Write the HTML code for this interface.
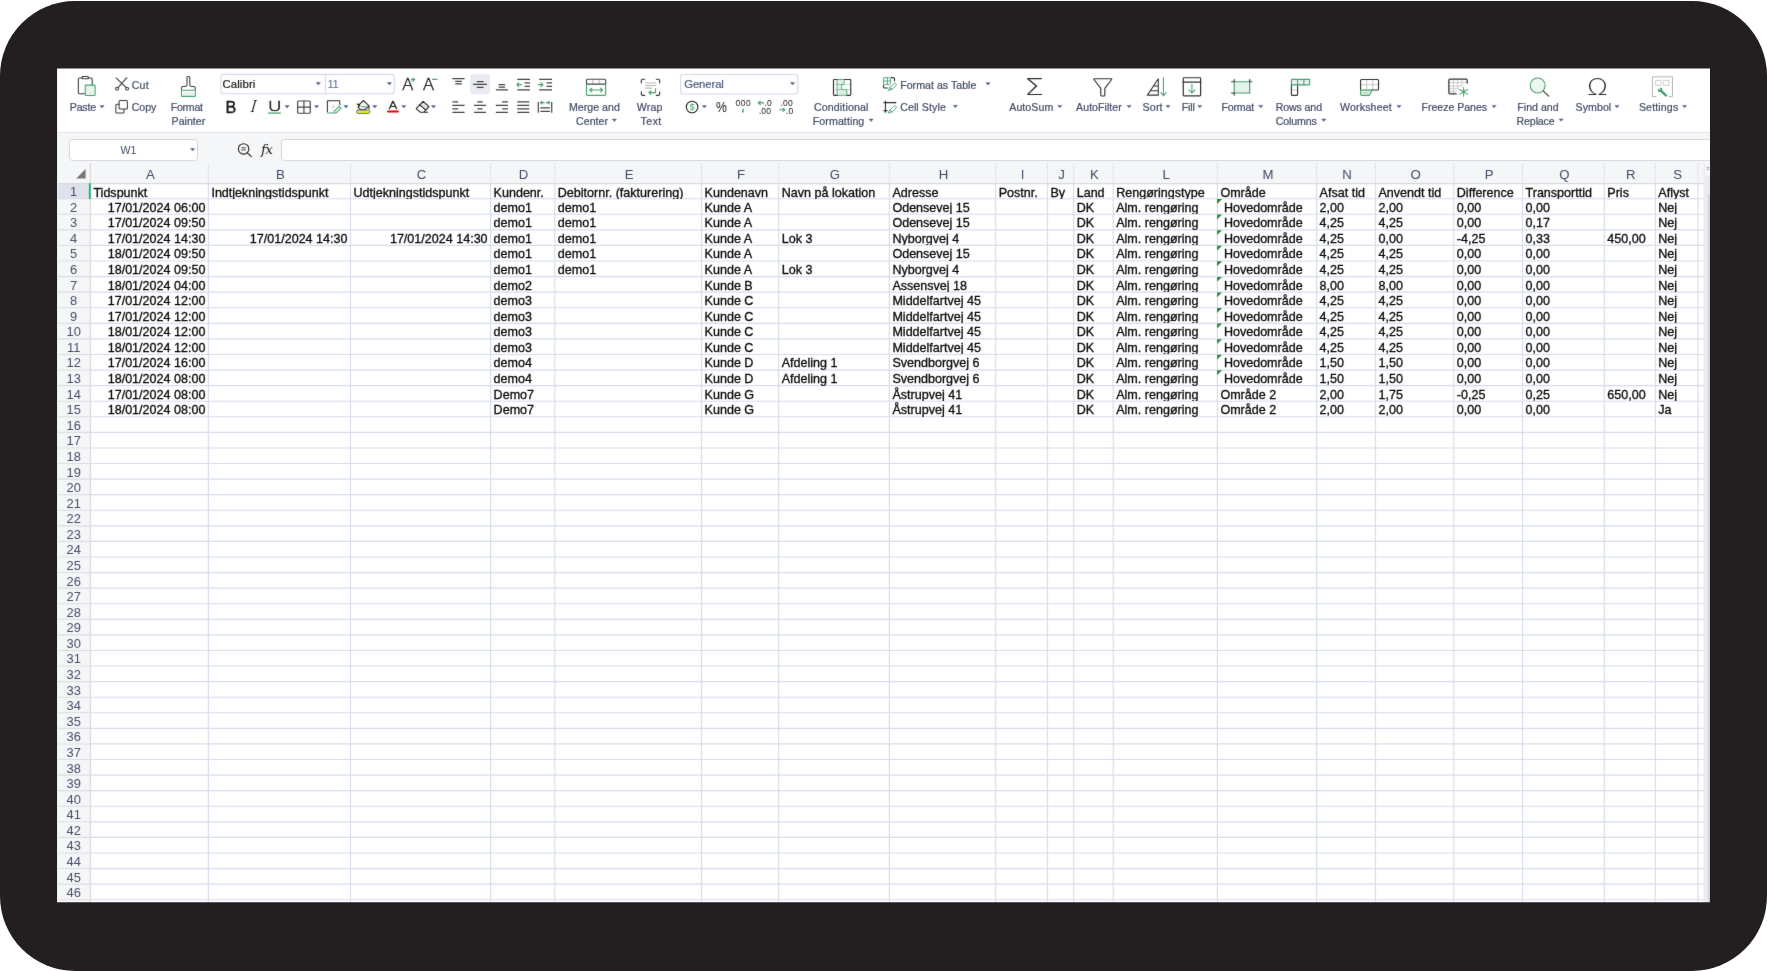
<!DOCTYPE html>
<html lang="da"><head><meta charset="utf-8"><title>Regneark</title>
<style>
html,body{margin:0;padding:0}
body{width:1767px;height:971px;background:#fff;position:relative;overflow:hidden;font-family:"Liberation Sans",sans-serif;}
#frame{position:absolute;left:0;top:1px;width:1767px;height:970px;background:#231f20;border-radius:75px}
#wrap{position:absolute;left:57px;top:68px;width:1653px;height:835px;overflow:hidden}
#inner{position:absolute;left:-57px;top:-68px;width:1767px;height:971px;will-change:transform;filter:url(#soft)}
.abs{position:absolute}
#fb{position:absolute;left:53px;top:132.3px;width:1661px;height:51.2px;background:#f5f6f8;border-top:1.2px solid #e1e5ee;box-sizing:border-box}
.ch{position:absolute;top:163.5px;height:20px;line-height:21px;font-size:13.2px;color:#3e4a66;text-align:center}
.rh{position:absolute;left:57px;width:33.4px;text-align:center;font-size:12.9px;color:#434e69;white-space:nowrap}
.c{position:absolute;font-size:12.55px;color:#0a0a0a;-webkit-text-stroke:0.3px #050505;white-space:nowrap;overflow:hidden;box-sizing:border-box;padding:0 3px}
.r{text-align:right}

.lb{position:absolute;line-height:14px;white-space:nowrap}
svg{position:absolute;overflow:visible}
</style></head><body>
<svg width="0" height="0" style="position:absolute"><filter id="soft" x="0" y="0" width="100%" height="100%" color-interpolation-filters="sRGB"><feConvolveMatrix order="3" kernelMatrix="0.00524 0.06192 0.00524 0.06192 0.73137 0.06192 0.00524 0.06192 0.00524" edgeMode="duplicate" preserveAlpha="true"/></filter></svg>
<div id="frame"></div>
<div id="wrap"><div id="inner">
<div class="abs" style="left:53px;top:64px;width:1661px;height:843px;background:#fff"></div>
<div id="fb"></div>

<div class="abs" style="left:69.2px;top:138.6px;width:128.6px;height:22.6px;box-sizing:border-box;border:1px solid #d4d6da;border-radius:3.5px;background:#fff;font-size:10.6px;color:#3e4a66;line-height:21px;text-align:center;padding-right:10px">W1</div>
<div class="abs" style="left:281.4px;top:138.6px;width:1440px;height:22.6px;box-sizing:border-box;border:1px solid #d4d6da;border-radius:3.5px;background:#fff"></div>
<svg style="left:236px;top:141px" width="18" height="18" viewBox="0 0 18 18"><circle cx="7.6" cy="7.9" r="5.2" fill="none" stroke="#222" stroke-width="1.1"/><path d="M11.4 11.8 L15.6 15.9" stroke="#222" stroke-width="1.1" fill="none"/><path d="M5.4 6.8h4.4M5.4 8.9h4.4" stroke="#222" stroke-width="0.85" fill="none"/></svg>
<div class="abs" style="left:260.9px;top:139.3px;font-family:'DejaVu Serif','Liberation Serif',serif;font-style:italic;font-size:13.6px;line-height:20px;color:#222;letter-spacing:-0.6px">fx</div>
<div class="abs" style="left:53px;top:163px;width:1651.2px;height:20.5px;background:#f5f6f8"></div>
<div class="abs" style="left:53px;top:183.5px;width:37.4px;height:723px;background:#f5f6f8"></div>
<div class="abs" style="left:53px;top:183.5px;width:36.4px;height:15.2px;background:#dfe2eb"></div>
<div class="abs" style="left:1704.2px;top:163px;width:9.8px;height:744px;background:#f6f7f9"></div>
<svg style="left:0;top:0" width="1767" height="971"><rect x="1705.4" y="175.5" width="8" height="731" fill="#e8eaef"/><rect x="1708.4" y="194" width="5" height="712" fill="#cdd0d7"/><path d="M1706.6 167.3h2.6M1706.6 169.3h2.6" stroke="#7f8fc0" stroke-width="0.9"/></svg>
<svg style="left:0;top:0" width="1767" height="971" viewBox="0 0 1767 971"><path d="M90.4 198.70H1704.2" stroke="#d6dcec" stroke-width="1.15"/><path d="M53 198.70H90.4" stroke="#dcdde1" stroke-width="1.1"/><path d="M90.4 214.28H1704.2" stroke="#d6dcec" stroke-width="1.15"/><path d="M53 214.28H90.4" stroke="#dcdde1" stroke-width="1.1"/><path d="M90.4 229.86H1704.2" stroke="#d6dcec" stroke-width="1.15"/><path d="M53 229.86H90.4" stroke="#dcdde1" stroke-width="1.1"/><path d="M90.4 245.43H1704.2" stroke="#d6dcec" stroke-width="1.15"/><path d="M53 245.43H90.4" stroke="#dcdde1" stroke-width="1.1"/><path d="M90.4 261.01H1704.2" stroke="#d6dcec" stroke-width="1.15"/><path d="M53 261.01H90.4" stroke="#dcdde1" stroke-width="1.1"/><path d="M90.4 276.59H1704.2" stroke="#d6dcec" stroke-width="1.15"/><path d="M53 276.59H90.4" stroke="#dcdde1" stroke-width="1.1"/><path d="M90.4 292.17H1704.2" stroke="#d6dcec" stroke-width="1.15"/><path d="M53 292.17H90.4" stroke="#dcdde1" stroke-width="1.1"/><path d="M90.4 307.75H1704.2" stroke="#d6dcec" stroke-width="1.15"/><path d="M53 307.75H90.4" stroke="#dcdde1" stroke-width="1.1"/><path d="M90.4 323.32H1704.2" stroke="#d6dcec" stroke-width="1.15"/><path d="M53 323.32H90.4" stroke="#dcdde1" stroke-width="1.1"/><path d="M90.4 338.90H1704.2" stroke="#d6dcec" stroke-width="1.15"/><path d="M53 338.90H90.4" stroke="#dcdde1" stroke-width="1.1"/><path d="M90.4 354.48H1704.2" stroke="#d6dcec" stroke-width="1.15"/><path d="M53 354.48H90.4" stroke="#dcdde1" stroke-width="1.1"/><path d="M90.4 370.06H1704.2" stroke="#d6dcec" stroke-width="1.15"/><path d="M53 370.06H90.4" stroke="#dcdde1" stroke-width="1.1"/><path d="M90.4 385.64H1704.2" stroke="#d6dcec" stroke-width="1.15"/><path d="M53 385.64H90.4" stroke="#dcdde1" stroke-width="1.1"/><path d="M90.4 401.21H1704.2" stroke="#d6dcec" stroke-width="1.15"/><path d="M53 401.21H90.4" stroke="#dcdde1" stroke-width="1.1"/><path d="M90.4 416.79H1704.2" stroke="#d6dcec" stroke-width="1.15"/><path d="M53 416.79H90.4" stroke="#dcdde1" stroke-width="1.1"/><path d="M90.4 432.37H1704.2" stroke="#d6dcec" stroke-width="1.15"/><path d="M53 432.37H90.4" stroke="#dcdde1" stroke-width="1.1"/><path d="M90.4 447.95H1704.2" stroke="#d6dcec" stroke-width="1.15"/><path d="M53 447.95H90.4" stroke="#dcdde1" stroke-width="1.1"/><path d="M90.4 463.53H1704.2" stroke="#d6dcec" stroke-width="1.15"/><path d="M53 463.53H90.4" stroke="#dcdde1" stroke-width="1.1"/><path d="M90.4 479.10H1704.2" stroke="#d6dcec" stroke-width="1.15"/><path d="M53 479.10H90.4" stroke="#dcdde1" stroke-width="1.1"/><path d="M90.4 494.68H1704.2" stroke="#d6dcec" stroke-width="1.15"/><path d="M53 494.68H90.4" stroke="#dcdde1" stroke-width="1.1"/><path d="M90.4 510.26H1704.2" stroke="#d6dcec" stroke-width="1.15"/><path d="M53 510.26H90.4" stroke="#dcdde1" stroke-width="1.1"/><path d="M90.4 525.84H1704.2" stroke="#d6dcec" stroke-width="1.15"/><path d="M53 525.84H90.4" stroke="#dcdde1" stroke-width="1.1"/><path d="M90.4 541.42H1704.2" stroke="#d6dcec" stroke-width="1.15"/><path d="M53 541.42H90.4" stroke="#dcdde1" stroke-width="1.1"/><path d="M90.4 556.99H1704.2" stroke="#d6dcec" stroke-width="1.15"/><path d="M53 556.99H90.4" stroke="#dcdde1" stroke-width="1.1"/><path d="M90.4 572.57H1704.2" stroke="#d6dcec" stroke-width="1.15"/><path d="M53 572.57H90.4" stroke="#dcdde1" stroke-width="1.1"/><path d="M90.4 588.15H1704.2" stroke="#d6dcec" stroke-width="1.15"/><path d="M53 588.15H90.4" stroke="#dcdde1" stroke-width="1.1"/><path d="M90.4 603.73H1704.2" stroke="#d6dcec" stroke-width="1.15"/><path d="M53 603.73H90.4" stroke="#dcdde1" stroke-width="1.1"/><path d="M90.4 619.31H1704.2" stroke="#d6dcec" stroke-width="1.15"/><path d="M53 619.31H90.4" stroke="#dcdde1" stroke-width="1.1"/><path d="M90.4 634.88H1704.2" stroke="#d6dcec" stroke-width="1.15"/><path d="M53 634.88H90.4" stroke="#dcdde1" stroke-width="1.1"/><path d="M90.4 650.46H1704.2" stroke="#d6dcec" stroke-width="1.15"/><path d="M53 650.46H90.4" stroke="#dcdde1" stroke-width="1.1"/><path d="M90.4 666.04H1704.2" stroke="#d6dcec" stroke-width="1.15"/><path d="M53 666.04H90.4" stroke="#dcdde1" stroke-width="1.1"/><path d="M90.4 681.62H1704.2" stroke="#d6dcec" stroke-width="1.15"/><path d="M53 681.62H90.4" stroke="#dcdde1" stroke-width="1.1"/><path d="M90.4 697.20H1704.2" stroke="#d6dcec" stroke-width="1.15"/><path d="M53 697.20H90.4" stroke="#dcdde1" stroke-width="1.1"/><path d="M90.4 712.77H1704.2" stroke="#d6dcec" stroke-width="1.15"/><path d="M53 712.77H90.4" stroke="#dcdde1" stroke-width="1.1"/><path d="M90.4 728.35H1704.2" stroke="#d6dcec" stroke-width="1.15"/><path d="M53 728.35H90.4" stroke="#dcdde1" stroke-width="1.1"/><path d="M90.4 743.93H1704.2" stroke="#d6dcec" stroke-width="1.15"/><path d="M53 743.93H90.4" stroke="#dcdde1" stroke-width="1.1"/><path d="M90.4 759.51H1704.2" stroke="#d6dcec" stroke-width="1.15"/><path d="M53 759.51H90.4" stroke="#dcdde1" stroke-width="1.1"/><path d="M90.4 775.09H1704.2" stroke="#d6dcec" stroke-width="1.15"/><path d="M53 775.09H90.4" stroke="#dcdde1" stroke-width="1.1"/><path d="M90.4 790.66H1704.2" stroke="#d6dcec" stroke-width="1.15"/><path d="M53 790.66H90.4" stroke="#dcdde1" stroke-width="1.1"/><path d="M90.4 806.24H1704.2" stroke="#d6dcec" stroke-width="1.15"/><path d="M53 806.24H90.4" stroke="#dcdde1" stroke-width="1.1"/><path d="M90.4 821.82H1704.2" stroke="#d6dcec" stroke-width="1.15"/><path d="M53 821.82H90.4" stroke="#dcdde1" stroke-width="1.1"/><path d="M90.4 837.40H1704.2" stroke="#d6dcec" stroke-width="1.15"/><path d="M53 837.40H90.4" stroke="#dcdde1" stroke-width="1.1"/><path d="M90.4 852.98H1704.2" stroke="#d6dcec" stroke-width="1.15"/><path d="M53 852.98H90.4" stroke="#dcdde1" stroke-width="1.1"/><path d="M90.4 868.55H1704.2" stroke="#d6dcec" stroke-width="1.15"/><path d="M53 868.55H90.4" stroke="#dcdde1" stroke-width="1.1"/><path d="M90.4 884.13H1704.2" stroke="#d6dcec" stroke-width="1.15"/><path d="M53 884.13H90.4" stroke="#dcdde1" stroke-width="1.1"/><path d="M90.4 899.71H1704.2" stroke="#d6dcec" stroke-width="1.15"/><path d="M53 899.71H90.4" stroke="#dcdde1" stroke-width="1.1"/><path d="M208.40 183.5V906" stroke="#d6dcec" stroke-width="1.15"/><path d="M208.40 163V183.5" stroke="#e3e4e8" stroke-width="1.1"/><path d="M350.50 183.5V906" stroke="#d6dcec" stroke-width="1.15"/><path d="M350.50 163V183.5" stroke="#e3e4e8" stroke-width="1.1"/><path d="M490.60 183.5V906" stroke="#d6dcec" stroke-width="1.15"/><path d="M490.60 163V183.5" stroke="#e3e4e8" stroke-width="1.1"/><path d="M554.80 183.5V906" stroke="#d6dcec" stroke-width="1.15"/><path d="M554.80 163V183.5" stroke="#e3e4e8" stroke-width="1.1"/><path d="M701.60 183.5V906" stroke="#d6dcec" stroke-width="1.15"/><path d="M701.60 163V183.5" stroke="#e3e4e8" stroke-width="1.1"/><path d="M778.70 183.5V906" stroke="#d6dcec" stroke-width="1.15"/><path d="M778.70 163V183.5" stroke="#e3e4e8" stroke-width="1.1"/><path d="M889.40 183.5V906" stroke="#d6dcec" stroke-width="1.15"/><path d="M889.40 163V183.5" stroke="#e3e4e8" stroke-width="1.1"/><path d="M995.70 183.5V906" stroke="#d6dcec" stroke-width="1.15"/><path d="M995.70 163V183.5" stroke="#e3e4e8" stroke-width="1.1"/><path d="M1047.50 183.5V906" stroke="#d6dcec" stroke-width="1.15"/><path d="M1047.50 163V183.5" stroke="#e3e4e8" stroke-width="1.1"/><path d="M1073.70 183.5V906" stroke="#d6dcec" stroke-width="1.15"/><path d="M1073.70 163V183.5" stroke="#e3e4e8" stroke-width="1.1"/><path d="M1113.20 183.5V906" stroke="#d6dcec" stroke-width="1.15"/><path d="M1113.20 163V183.5" stroke="#e3e4e8" stroke-width="1.1"/><path d="M1217.40 183.5V906" stroke="#d6dcec" stroke-width="1.15"/><path d="M1217.40 163V183.5" stroke="#e3e4e8" stroke-width="1.1"/><path d="M1316.60 183.5V906" stroke="#d6dcec" stroke-width="1.15"/><path d="M1316.60 163V183.5" stroke="#e3e4e8" stroke-width="1.1"/><path d="M1375.50 183.5V906" stroke="#d6dcec" stroke-width="1.15"/><path d="M1375.50 163V183.5" stroke="#e3e4e8" stroke-width="1.1"/><path d="M1453.80 183.5V906" stroke="#d6dcec" stroke-width="1.15"/><path d="M1453.80 163V183.5" stroke="#e3e4e8" stroke-width="1.1"/><path d="M1522.50 183.5V906" stroke="#d6dcec" stroke-width="1.15"/><path d="M1522.50 163V183.5" stroke="#e3e4e8" stroke-width="1.1"/><path d="M1604.30 183.5V906" stroke="#d6dcec" stroke-width="1.15"/><path d="M1604.30 163V183.5" stroke="#e3e4e8" stroke-width="1.1"/><path d="M1655.30 183.5V906" stroke="#d6dcec" stroke-width="1.15"/><path d="M1655.30 163V183.5" stroke="#e3e4e8" stroke-width="1.1"/><path d="M1698.00 183.5V906" stroke="#d6dcec" stroke-width="1.15"/><path d="M1698.00 163V183.5" stroke="#e3e4e8" stroke-width="1.1"/><path d="M90.40 163V906" stroke="#d9d9dc" stroke-width="1.2"/><path d="M53 183.6H1704.2" stroke="#d9d9dc" stroke-width="1.3"/><path d="M1704.20 163V906" stroke="#e6e7ea" stroke-width="1"/><path d="M89.8 183.2V199" stroke="#12b46f" stroke-width="1.8"/><path d="M85.6 169V178.4H76.2Z" fill="#767676"/><path d="M57.5 68.5V906" stroke="#e9eaed" stroke-width="1"/></svg>
<div class="ch" style="left:91.3px;width:118.0px">A</div>
<div class="ch" style="left:209.3px;width:142.1px">B</div>
<div class="ch" style="left:351.4px;width:140.1px">C</div>
<div class="ch" style="left:491.5px;width:64.2px">D</div>
<div class="ch" style="left:555.7px;width:146.8px">E</div>
<div class="ch" style="left:702.5px;width:77.1px">F</div>
<div class="ch" style="left:779.6px;width:110.7px">G</div>
<div class="ch" style="left:890.3px;width:106.3px">H</div>
<div class="ch" style="left:996.6px;width:51.8px">I</div>
<div class="ch" style="left:1048.4px;width:26.2px">J</div>
<div class="ch" style="left:1074.6px;width:39.5px">K</div>
<div class="ch" style="left:1114.1px;width:104.2px">L</div>
<div class="ch" style="left:1218.3px;width:99.2px">M</div>
<div class="ch" style="left:1317.5px;width:58.9px">N</div>
<div class="ch" style="left:1376.4px;width:78.3px">O</div>
<div class="ch" style="left:1454.7px;width:68.7px">P</div>
<div class="ch" style="left:1523.4px;width:81.8px">Q</div>
<div class="ch" style="left:1605.2px;width:51.0px">R</div>
<div class="ch" style="left:1656.2px;width:42.7px">S</div>
<div class="rh" style="top:183.50px;height:15.20px;line-height:16.80px">1</div>
<div class="rh" style="top:198.70px;height:15.58px;line-height:17.18px">2</div>
<div class="rh" style="top:214.28px;height:15.58px;line-height:17.18px">3</div>
<div class="rh" style="top:229.86px;height:15.58px;line-height:17.18px">4</div>
<div class="rh" style="top:245.43px;height:15.58px;line-height:17.18px">5</div>
<div class="rh" style="top:261.01px;height:15.58px;line-height:17.18px">6</div>
<div class="rh" style="top:276.59px;height:15.58px;line-height:17.18px">7</div>
<div class="rh" style="top:292.17px;height:15.58px;line-height:17.18px">8</div>
<div class="rh" style="top:307.75px;height:15.58px;line-height:17.18px">9</div>
<div class="rh" style="top:323.32px;height:15.58px;line-height:17.18px">10</div>
<div class="rh" style="top:338.90px;height:15.58px;line-height:17.18px">11</div>
<div class="rh" style="top:354.48px;height:15.58px;line-height:17.18px">12</div>
<div class="rh" style="top:370.06px;height:15.58px;line-height:17.18px">13</div>
<div class="rh" style="top:385.64px;height:15.58px;line-height:17.18px">14</div>
<div class="rh" style="top:401.21px;height:15.58px;line-height:17.18px">15</div>
<div class="rh" style="top:416.79px;height:15.58px;line-height:17.18px">16</div>
<div class="rh" style="top:432.37px;height:15.58px;line-height:17.18px">17</div>
<div class="rh" style="top:447.95px;height:15.58px;line-height:17.18px">18</div>
<div class="rh" style="top:463.53px;height:15.58px;line-height:17.18px">19</div>
<div class="rh" style="top:479.10px;height:15.58px;line-height:17.18px">20</div>
<div class="rh" style="top:494.68px;height:15.58px;line-height:17.18px">21</div>
<div class="rh" style="top:510.26px;height:15.58px;line-height:17.18px">22</div>
<div class="rh" style="top:525.84px;height:15.58px;line-height:17.18px">23</div>
<div class="rh" style="top:541.42px;height:15.58px;line-height:17.18px">24</div>
<div class="rh" style="top:556.99px;height:15.58px;line-height:17.18px">25</div>
<div class="rh" style="top:572.57px;height:15.58px;line-height:17.18px">26</div>
<div class="rh" style="top:588.15px;height:15.58px;line-height:17.18px">27</div>
<div class="rh" style="top:603.73px;height:15.58px;line-height:17.18px">28</div>
<div class="rh" style="top:619.31px;height:15.58px;line-height:17.18px">29</div>
<div class="rh" style="top:634.88px;height:15.58px;line-height:17.18px">30</div>
<div class="rh" style="top:650.46px;height:15.58px;line-height:17.18px">31</div>
<div class="rh" style="top:666.04px;height:15.58px;line-height:17.18px">32</div>
<div class="rh" style="top:681.62px;height:15.58px;line-height:17.18px">33</div>
<div class="rh" style="top:697.20px;height:15.58px;line-height:17.18px">34</div>
<div class="rh" style="top:712.77px;height:15.58px;line-height:17.18px">35</div>
<div class="rh" style="top:728.35px;height:15.58px;line-height:17.18px">36</div>
<div class="rh" style="top:743.93px;height:15.58px;line-height:17.18px">37</div>
<div class="rh" style="top:759.51px;height:15.58px;line-height:17.18px">38</div>
<div class="rh" style="top:775.09px;height:15.58px;line-height:17.18px">39</div>
<div class="rh" style="top:790.66px;height:15.58px;line-height:17.18px">40</div>
<div class="rh" style="top:806.24px;height:15.58px;line-height:17.18px">41</div>
<div class="rh" style="top:821.82px;height:15.58px;line-height:17.18px">42</div>
<div class="rh" style="top:837.40px;height:15.58px;line-height:17.18px">43</div>
<div class="rh" style="top:852.98px;height:15.58px;line-height:17.18px">44</div>
<div class="rh" style="top:868.55px;height:15.58px;line-height:17.18px">45</div>
<div class="rh" style="top:884.13px;height:15.58px;line-height:17.18px">46</div>
<div class="c" style="left:90.4px;top:183.50px;width:118.0px;height:15.20px;line-height:18.10px">Tidspunkt</div>
<div class="c" style="left:208.4px;top:183.50px;width:142.1px;height:15.20px;line-height:18.10px">Indtjekningstidspunkt</div>
<div class="c" style="left:350.5px;top:183.50px;width:140.1px;height:15.20px;line-height:18.10px">Udtjekningstidspunkt</div>
<div class="c" style="left:490.6px;top:183.50px;width:64.2px;height:15.20px;line-height:18.10px">Kundenr.</div>
<div class="c" style="left:554.8px;top:183.50px;width:146.8px;height:15.20px;line-height:18.10px">Debitornr. (fakturering)</div>
<div class="c" style="left:701.6px;top:183.50px;width:77.1px;height:15.20px;line-height:18.10px">Kundenavn</div>
<div class="c" style="left:778.7px;top:183.50px;width:110.7px;height:15.20px;line-height:18.10px">Navn på lokation</div>
<div class="c" style="left:889.4px;top:183.50px;width:106.3px;height:15.20px;line-height:18.10px">Adresse</div>
<div class="c" style="left:995.7px;top:183.50px;width:51.8px;height:15.20px;line-height:18.10px">Postnr.</div>
<div class="c" style="left:1047.5px;top:183.50px;width:26.2px;height:15.20px;line-height:18.10px">By</div>
<div class="c" style="left:1073.7px;top:183.50px;width:39.5px;height:15.20px;line-height:18.10px">Land</div>
<div class="c" style="left:1113.2px;top:183.50px;width:104.2px;height:15.20px;line-height:18.10px">Rengøringstype</div>
<div class="c" style="left:1217.4px;top:183.50px;width:99.2px;height:15.20px;line-height:18.10px">Område</div>
<div class="c" style="left:1316.6px;top:183.50px;width:58.9px;height:15.20px;line-height:18.10px">Afsat tid</div>
<div class="c" style="left:1375.5px;top:183.50px;width:78.3px;height:15.20px;line-height:18.10px">Anvendt tid</div>
<div class="c" style="left:1453.8px;top:183.50px;width:68.7px;height:15.20px;line-height:18.10px">Difference</div>
<div class="c" style="left:1522.5px;top:183.50px;width:81.8px;height:15.20px;line-height:18.10px">Transporttid</div>
<div class="c" style="left:1604.3px;top:183.50px;width:51.0px;height:15.20px;line-height:18.10px">Pris</div>
<div class="c" style="left:1655.3px;top:183.50px;width:42.7px;height:15.20px;line-height:18.10px">Aflyst</div>
<div class="c r" style="left:90.4px;top:198.70px;width:118.0px;height:15.58px;line-height:18.48px">17/01/2024 06:00</div>
<div class="c" style="left:490.6px;top:198.70px;width:64.2px;height:15.58px;line-height:18.48px">demo1</div>
<div class="c" style="left:554.8px;top:198.70px;width:146.8px;height:15.58px;line-height:18.48px">demo1</div>
<div class="c" style="left:701.6px;top:198.70px;width:77.1px;height:15.58px;line-height:18.48px">Kunde A</div>
<div class="c" style="left:889.4px;top:198.70px;width:106.3px;height:15.58px;line-height:18.48px">Odensevej 15</div>
<div class="c" style="left:1073.7px;top:198.70px;width:39.5px;height:15.58px;line-height:18.48px">DK</div>
<div class="c" style="left:1113.2px;top:198.70px;width:104.2px;height:15.58px;line-height:18.48px">Alm. rengøring</div>
<div class="c" style="left:1217.4px;top:198.70px;width:99.2px;height:15.58px;line-height:18.48px"> Hovedområde</div>
<div class="c" style="left:1316.6px;top:198.70px;width:58.9px;height:15.58px;line-height:18.48px">2,00</div>
<div class="c" style="left:1375.5px;top:198.70px;width:78.3px;height:15.58px;line-height:18.48px">2,00</div>
<div class="c" style="left:1453.8px;top:198.70px;width:68.7px;height:15.58px;line-height:18.48px">0,00</div>
<div class="c" style="left:1522.5px;top:198.70px;width:81.8px;height:15.58px;line-height:18.48px">0,00</div>
<div class="c" style="left:1655.3px;top:198.70px;width:42.7px;height:15.58px;line-height:18.48px">Nej</div>
<div class="c r" style="left:90.4px;top:214.28px;width:118.0px;height:15.58px;line-height:18.48px">17/01/2024 09:50</div>
<div class="c" style="left:490.6px;top:214.28px;width:64.2px;height:15.58px;line-height:18.48px">demo1</div>
<div class="c" style="left:554.8px;top:214.28px;width:146.8px;height:15.58px;line-height:18.48px">demo1</div>
<div class="c" style="left:701.6px;top:214.28px;width:77.1px;height:15.58px;line-height:18.48px">Kunde A</div>
<div class="c" style="left:889.4px;top:214.28px;width:106.3px;height:15.58px;line-height:18.48px">Odensevej 15</div>
<div class="c" style="left:1073.7px;top:214.28px;width:39.5px;height:15.58px;line-height:18.48px">DK</div>
<div class="c" style="left:1113.2px;top:214.28px;width:104.2px;height:15.58px;line-height:18.48px">Alm. rengøring</div>
<div class="c" style="left:1217.4px;top:214.28px;width:99.2px;height:15.58px;line-height:18.48px"> Hovedområde</div>
<div class="c" style="left:1316.6px;top:214.28px;width:58.9px;height:15.58px;line-height:18.48px">4,25</div>
<div class="c" style="left:1375.5px;top:214.28px;width:78.3px;height:15.58px;line-height:18.48px">4,25</div>
<div class="c" style="left:1453.8px;top:214.28px;width:68.7px;height:15.58px;line-height:18.48px">0,00</div>
<div class="c" style="left:1522.5px;top:214.28px;width:81.8px;height:15.58px;line-height:18.48px">0,17</div>
<div class="c" style="left:1655.3px;top:214.28px;width:42.7px;height:15.58px;line-height:18.48px">Nej</div>
<div class="c r" style="left:90.4px;top:229.86px;width:118.0px;height:15.58px;line-height:18.48px">17/01/2024 14:30</div>
<div class="c r" style="left:208.4px;top:229.86px;width:142.1px;height:15.58px;line-height:18.48px">17/01/2024 14:30</div>
<div class="c r" style="left:350.5px;top:229.86px;width:140.1px;height:15.58px;line-height:18.48px">17/01/2024 14:30</div>
<div class="c" style="left:490.6px;top:229.86px;width:64.2px;height:15.58px;line-height:18.48px">demo1</div>
<div class="c" style="left:554.8px;top:229.86px;width:146.8px;height:15.58px;line-height:18.48px">demo1</div>
<div class="c" style="left:701.6px;top:229.86px;width:77.1px;height:15.58px;line-height:18.48px">Kunde A</div>
<div class="c" style="left:778.7px;top:229.86px;width:110.7px;height:15.58px;line-height:18.48px">Lok 3</div>
<div class="c" style="left:889.4px;top:229.86px;width:106.3px;height:15.58px;line-height:18.48px">Nyborgvej 4</div>
<div class="c" style="left:1073.7px;top:229.86px;width:39.5px;height:15.58px;line-height:18.48px">DK</div>
<div class="c" style="left:1113.2px;top:229.86px;width:104.2px;height:15.58px;line-height:18.48px">Alm. rengøring</div>
<div class="c" style="left:1217.4px;top:229.86px;width:99.2px;height:15.58px;line-height:18.48px"> Hovedområde</div>
<div class="c" style="left:1316.6px;top:229.86px;width:58.9px;height:15.58px;line-height:18.48px">4,25</div>
<div class="c" style="left:1375.5px;top:229.86px;width:78.3px;height:15.58px;line-height:18.48px">0,00</div>
<div class="c" style="left:1453.8px;top:229.86px;width:68.7px;height:15.58px;line-height:18.48px">-4,25</div>
<div class="c" style="left:1522.5px;top:229.86px;width:81.8px;height:15.58px;line-height:18.48px">0,33</div>
<div class="c" style="left:1604.3px;top:229.86px;width:51.0px;height:15.58px;line-height:18.48px">450,00</div>
<div class="c" style="left:1655.3px;top:229.86px;width:42.7px;height:15.58px;line-height:18.48px">Nej</div>
<div class="c r" style="left:90.4px;top:245.43px;width:118.0px;height:15.58px;line-height:18.48px">18/01/2024 09:50</div>
<div class="c" style="left:490.6px;top:245.43px;width:64.2px;height:15.58px;line-height:18.48px">demo1</div>
<div class="c" style="left:554.8px;top:245.43px;width:146.8px;height:15.58px;line-height:18.48px">demo1</div>
<div class="c" style="left:701.6px;top:245.43px;width:77.1px;height:15.58px;line-height:18.48px">Kunde A</div>
<div class="c" style="left:889.4px;top:245.43px;width:106.3px;height:15.58px;line-height:18.48px">Odensevej 15</div>
<div class="c" style="left:1073.7px;top:245.43px;width:39.5px;height:15.58px;line-height:18.48px">DK</div>
<div class="c" style="left:1113.2px;top:245.43px;width:104.2px;height:15.58px;line-height:18.48px">Alm. rengøring</div>
<div class="c" style="left:1217.4px;top:245.43px;width:99.2px;height:15.58px;line-height:18.48px"> Hovedområde</div>
<div class="c" style="left:1316.6px;top:245.43px;width:58.9px;height:15.58px;line-height:18.48px">4,25</div>
<div class="c" style="left:1375.5px;top:245.43px;width:78.3px;height:15.58px;line-height:18.48px">4,25</div>
<div class="c" style="left:1453.8px;top:245.43px;width:68.7px;height:15.58px;line-height:18.48px">0,00</div>
<div class="c" style="left:1522.5px;top:245.43px;width:81.8px;height:15.58px;line-height:18.48px">0,00</div>
<div class="c" style="left:1655.3px;top:245.43px;width:42.7px;height:15.58px;line-height:18.48px">Nej</div>
<div class="c r" style="left:90.4px;top:261.01px;width:118.0px;height:15.58px;line-height:18.48px">18/01/2024 09:50</div>
<div class="c" style="left:490.6px;top:261.01px;width:64.2px;height:15.58px;line-height:18.48px">demo1</div>
<div class="c" style="left:554.8px;top:261.01px;width:146.8px;height:15.58px;line-height:18.48px">demo1</div>
<div class="c" style="left:701.6px;top:261.01px;width:77.1px;height:15.58px;line-height:18.48px">Kunde A</div>
<div class="c" style="left:778.7px;top:261.01px;width:110.7px;height:15.58px;line-height:18.48px">Lok 3</div>
<div class="c" style="left:889.4px;top:261.01px;width:106.3px;height:15.58px;line-height:18.48px">Nyborgvej 4</div>
<div class="c" style="left:1073.7px;top:261.01px;width:39.5px;height:15.58px;line-height:18.48px">DK</div>
<div class="c" style="left:1113.2px;top:261.01px;width:104.2px;height:15.58px;line-height:18.48px">Alm. rengøring</div>
<div class="c" style="left:1217.4px;top:261.01px;width:99.2px;height:15.58px;line-height:18.48px"> Hovedområde</div>
<div class="c" style="left:1316.6px;top:261.01px;width:58.9px;height:15.58px;line-height:18.48px">4,25</div>
<div class="c" style="left:1375.5px;top:261.01px;width:78.3px;height:15.58px;line-height:18.48px">4,25</div>
<div class="c" style="left:1453.8px;top:261.01px;width:68.7px;height:15.58px;line-height:18.48px">0,00</div>
<div class="c" style="left:1522.5px;top:261.01px;width:81.8px;height:15.58px;line-height:18.48px">0,00</div>
<div class="c" style="left:1655.3px;top:261.01px;width:42.7px;height:15.58px;line-height:18.48px">Nej</div>
<div class="c r" style="left:90.4px;top:276.59px;width:118.0px;height:15.58px;line-height:18.48px">18/01/2024 04:00</div>
<div class="c" style="left:490.6px;top:276.59px;width:64.2px;height:15.58px;line-height:18.48px">demo2</div>
<div class="c" style="left:701.6px;top:276.59px;width:77.1px;height:15.58px;line-height:18.48px">Kunde B</div>
<div class="c" style="left:889.4px;top:276.59px;width:106.3px;height:15.58px;line-height:18.48px">Assensvej 18</div>
<div class="c" style="left:1073.7px;top:276.59px;width:39.5px;height:15.58px;line-height:18.48px">DK</div>
<div class="c" style="left:1113.2px;top:276.59px;width:104.2px;height:15.58px;line-height:18.48px">Alm. rengøring</div>
<div class="c" style="left:1217.4px;top:276.59px;width:99.2px;height:15.58px;line-height:18.48px"> Hovedområde</div>
<div class="c" style="left:1316.6px;top:276.59px;width:58.9px;height:15.58px;line-height:18.48px">8,00</div>
<div class="c" style="left:1375.5px;top:276.59px;width:78.3px;height:15.58px;line-height:18.48px">8,00</div>
<div class="c" style="left:1453.8px;top:276.59px;width:68.7px;height:15.58px;line-height:18.48px">0,00</div>
<div class="c" style="left:1522.5px;top:276.59px;width:81.8px;height:15.58px;line-height:18.48px">0,00</div>
<div class="c" style="left:1655.3px;top:276.59px;width:42.7px;height:15.58px;line-height:18.48px">Nej</div>
<div class="c r" style="left:90.4px;top:292.17px;width:118.0px;height:15.58px;line-height:18.48px">17/01/2024 12:00</div>
<div class="c" style="left:490.6px;top:292.17px;width:64.2px;height:15.58px;line-height:18.48px">demo3</div>
<div class="c" style="left:701.6px;top:292.17px;width:77.1px;height:15.58px;line-height:18.48px">Kunde C</div>
<div class="c" style="left:889.4px;top:292.17px;width:106.3px;height:15.58px;line-height:18.48px">Middelfartvej 45</div>
<div class="c" style="left:1073.7px;top:292.17px;width:39.5px;height:15.58px;line-height:18.48px">DK</div>
<div class="c" style="left:1113.2px;top:292.17px;width:104.2px;height:15.58px;line-height:18.48px">Alm. rengøring</div>
<div class="c" style="left:1217.4px;top:292.17px;width:99.2px;height:15.58px;line-height:18.48px"> Hovedområde</div>
<div class="c" style="left:1316.6px;top:292.17px;width:58.9px;height:15.58px;line-height:18.48px">4,25</div>
<div class="c" style="left:1375.5px;top:292.17px;width:78.3px;height:15.58px;line-height:18.48px">4,25</div>
<div class="c" style="left:1453.8px;top:292.17px;width:68.7px;height:15.58px;line-height:18.48px">0,00</div>
<div class="c" style="left:1522.5px;top:292.17px;width:81.8px;height:15.58px;line-height:18.48px">0,00</div>
<div class="c" style="left:1655.3px;top:292.17px;width:42.7px;height:15.58px;line-height:18.48px">Nej</div>
<div class="c r" style="left:90.4px;top:307.75px;width:118.0px;height:15.58px;line-height:18.48px">17/01/2024 12:00</div>
<div class="c" style="left:490.6px;top:307.75px;width:64.2px;height:15.58px;line-height:18.48px">demo3</div>
<div class="c" style="left:701.6px;top:307.75px;width:77.1px;height:15.58px;line-height:18.48px">Kunde C</div>
<div class="c" style="left:889.4px;top:307.75px;width:106.3px;height:15.58px;line-height:18.48px">Middelfartvej 45</div>
<div class="c" style="left:1073.7px;top:307.75px;width:39.5px;height:15.58px;line-height:18.48px">DK</div>
<div class="c" style="left:1113.2px;top:307.75px;width:104.2px;height:15.58px;line-height:18.48px">Alm. rengøring</div>
<div class="c" style="left:1217.4px;top:307.75px;width:99.2px;height:15.58px;line-height:18.48px"> Hovedområde</div>
<div class="c" style="left:1316.6px;top:307.75px;width:58.9px;height:15.58px;line-height:18.48px">4,25</div>
<div class="c" style="left:1375.5px;top:307.75px;width:78.3px;height:15.58px;line-height:18.48px">4,25</div>
<div class="c" style="left:1453.8px;top:307.75px;width:68.7px;height:15.58px;line-height:18.48px">0,00</div>
<div class="c" style="left:1522.5px;top:307.75px;width:81.8px;height:15.58px;line-height:18.48px">0,00</div>
<div class="c" style="left:1655.3px;top:307.75px;width:42.7px;height:15.58px;line-height:18.48px">Nej</div>
<div class="c r" style="left:90.4px;top:323.32px;width:118.0px;height:15.58px;line-height:18.48px">18/01/2024 12:00</div>
<div class="c" style="left:490.6px;top:323.32px;width:64.2px;height:15.58px;line-height:18.48px">demo3</div>
<div class="c" style="left:701.6px;top:323.32px;width:77.1px;height:15.58px;line-height:18.48px">Kunde C</div>
<div class="c" style="left:889.4px;top:323.32px;width:106.3px;height:15.58px;line-height:18.48px">Middelfartvej 45</div>
<div class="c" style="left:1073.7px;top:323.32px;width:39.5px;height:15.58px;line-height:18.48px">DK</div>
<div class="c" style="left:1113.2px;top:323.32px;width:104.2px;height:15.58px;line-height:18.48px">Alm. rengøring</div>
<div class="c" style="left:1217.4px;top:323.32px;width:99.2px;height:15.58px;line-height:18.48px"> Hovedområde</div>
<div class="c" style="left:1316.6px;top:323.32px;width:58.9px;height:15.58px;line-height:18.48px">4,25</div>
<div class="c" style="left:1375.5px;top:323.32px;width:78.3px;height:15.58px;line-height:18.48px">4,25</div>
<div class="c" style="left:1453.8px;top:323.32px;width:68.7px;height:15.58px;line-height:18.48px">0,00</div>
<div class="c" style="left:1522.5px;top:323.32px;width:81.8px;height:15.58px;line-height:18.48px">0,00</div>
<div class="c" style="left:1655.3px;top:323.32px;width:42.7px;height:15.58px;line-height:18.48px">Nej</div>
<div class="c r" style="left:90.4px;top:338.90px;width:118.0px;height:15.58px;line-height:18.48px">18/01/2024 12:00</div>
<div class="c" style="left:490.6px;top:338.90px;width:64.2px;height:15.58px;line-height:18.48px">demo3</div>
<div class="c" style="left:701.6px;top:338.90px;width:77.1px;height:15.58px;line-height:18.48px">Kunde C</div>
<div class="c" style="left:889.4px;top:338.90px;width:106.3px;height:15.58px;line-height:18.48px">Middelfartvej 45</div>
<div class="c" style="left:1073.7px;top:338.90px;width:39.5px;height:15.58px;line-height:18.48px">DK</div>
<div class="c" style="left:1113.2px;top:338.90px;width:104.2px;height:15.58px;line-height:18.48px">Alm. rengøring</div>
<div class="c" style="left:1217.4px;top:338.90px;width:99.2px;height:15.58px;line-height:18.48px"> Hovedområde</div>
<div class="c" style="left:1316.6px;top:338.90px;width:58.9px;height:15.58px;line-height:18.48px">4,25</div>
<div class="c" style="left:1375.5px;top:338.90px;width:78.3px;height:15.58px;line-height:18.48px">4,25</div>
<div class="c" style="left:1453.8px;top:338.90px;width:68.7px;height:15.58px;line-height:18.48px">0,00</div>
<div class="c" style="left:1522.5px;top:338.90px;width:81.8px;height:15.58px;line-height:18.48px">0,00</div>
<div class="c" style="left:1655.3px;top:338.90px;width:42.7px;height:15.58px;line-height:18.48px">Nej</div>
<div class="c r" style="left:90.4px;top:354.48px;width:118.0px;height:15.58px;line-height:18.48px">17/01/2024 16:00</div>
<div class="c" style="left:490.6px;top:354.48px;width:64.2px;height:15.58px;line-height:18.48px">demo4</div>
<div class="c" style="left:701.6px;top:354.48px;width:77.1px;height:15.58px;line-height:18.48px">Kunde D</div>
<div class="c" style="left:778.7px;top:354.48px;width:110.7px;height:15.58px;line-height:18.48px">Afdeling 1</div>
<div class="c" style="left:889.4px;top:354.48px;width:106.3px;height:15.58px;line-height:18.48px">Svendborgvej 6</div>
<div class="c" style="left:1073.7px;top:354.48px;width:39.5px;height:15.58px;line-height:18.48px">DK</div>
<div class="c" style="left:1113.2px;top:354.48px;width:104.2px;height:15.58px;line-height:18.48px">Alm. rengøring</div>
<div class="c" style="left:1217.4px;top:354.48px;width:99.2px;height:15.58px;line-height:18.48px"> Hovedområde</div>
<div class="c" style="left:1316.6px;top:354.48px;width:58.9px;height:15.58px;line-height:18.48px">1,50</div>
<div class="c" style="left:1375.5px;top:354.48px;width:78.3px;height:15.58px;line-height:18.48px">1,50</div>
<div class="c" style="left:1453.8px;top:354.48px;width:68.7px;height:15.58px;line-height:18.48px">0,00</div>
<div class="c" style="left:1522.5px;top:354.48px;width:81.8px;height:15.58px;line-height:18.48px">0,00</div>
<div class="c" style="left:1655.3px;top:354.48px;width:42.7px;height:15.58px;line-height:18.48px">Nej</div>
<div class="c r" style="left:90.4px;top:370.06px;width:118.0px;height:15.58px;line-height:18.48px">18/01/2024 08:00</div>
<div class="c" style="left:490.6px;top:370.06px;width:64.2px;height:15.58px;line-height:18.48px">demo4</div>
<div class="c" style="left:701.6px;top:370.06px;width:77.1px;height:15.58px;line-height:18.48px">Kunde D</div>
<div class="c" style="left:778.7px;top:370.06px;width:110.7px;height:15.58px;line-height:18.48px">Afdeling 1</div>
<div class="c" style="left:889.4px;top:370.06px;width:106.3px;height:15.58px;line-height:18.48px">Svendborgvej 6</div>
<div class="c" style="left:1073.7px;top:370.06px;width:39.5px;height:15.58px;line-height:18.48px">DK</div>
<div class="c" style="left:1113.2px;top:370.06px;width:104.2px;height:15.58px;line-height:18.48px">Alm. rengøring</div>
<div class="c" style="left:1217.4px;top:370.06px;width:99.2px;height:15.58px;line-height:18.48px"> Hovedområde</div>
<div class="c" style="left:1316.6px;top:370.06px;width:58.9px;height:15.58px;line-height:18.48px">1,50</div>
<div class="c" style="left:1375.5px;top:370.06px;width:78.3px;height:15.58px;line-height:18.48px">1,50</div>
<div class="c" style="left:1453.8px;top:370.06px;width:68.7px;height:15.58px;line-height:18.48px">0,00</div>
<div class="c" style="left:1522.5px;top:370.06px;width:81.8px;height:15.58px;line-height:18.48px">0,00</div>
<div class="c" style="left:1655.3px;top:370.06px;width:42.7px;height:15.58px;line-height:18.48px">Nej</div>
<div class="c r" style="left:90.4px;top:385.64px;width:118.0px;height:15.58px;line-height:18.48px">17/01/2024 08:00</div>
<div class="c" style="left:490.6px;top:385.64px;width:64.2px;height:15.58px;line-height:18.48px">Demo7</div>
<div class="c" style="left:701.6px;top:385.64px;width:77.1px;height:15.58px;line-height:18.48px">Kunde G</div>
<div class="c" style="left:889.4px;top:385.64px;width:106.3px;height:15.58px;line-height:18.48px">Åstrupvej 41</div>
<div class="c" style="left:1073.7px;top:385.64px;width:39.5px;height:15.58px;line-height:18.48px">DK</div>
<div class="c" style="left:1113.2px;top:385.64px;width:104.2px;height:15.58px;line-height:18.48px">Alm. rengøring</div>
<div class="c" style="left:1217.4px;top:385.64px;width:99.2px;height:15.58px;line-height:18.48px">Område 2</div>
<div class="c" style="left:1316.6px;top:385.64px;width:58.9px;height:15.58px;line-height:18.48px">2,00</div>
<div class="c" style="left:1375.5px;top:385.64px;width:78.3px;height:15.58px;line-height:18.48px">1,75</div>
<div class="c" style="left:1453.8px;top:385.64px;width:68.7px;height:15.58px;line-height:18.48px">-0,25</div>
<div class="c" style="left:1522.5px;top:385.64px;width:81.8px;height:15.58px;line-height:18.48px">0,25</div>
<div class="c" style="left:1604.3px;top:385.64px;width:51.0px;height:15.58px;line-height:18.48px">650,00</div>
<div class="c" style="left:1655.3px;top:385.64px;width:42.7px;height:15.58px;line-height:18.48px">Nej</div>
<div class="c r" style="left:90.4px;top:401.21px;width:118.0px;height:15.58px;line-height:18.48px">18/01/2024 08:00</div>
<div class="c" style="left:490.6px;top:401.21px;width:64.2px;height:15.58px;line-height:18.48px">Demo7</div>
<div class="c" style="left:701.6px;top:401.21px;width:77.1px;height:15.58px;line-height:18.48px">Kunde G</div>
<div class="c" style="left:889.4px;top:401.21px;width:106.3px;height:15.58px;line-height:18.48px">Åstrupvej 41</div>
<div class="c" style="left:1073.7px;top:401.21px;width:39.5px;height:15.58px;line-height:18.48px">DK</div>
<div class="c" style="left:1113.2px;top:401.21px;width:104.2px;height:15.58px;line-height:18.48px">Alm. rengøring</div>
<div class="c" style="left:1217.4px;top:401.21px;width:99.2px;height:15.58px;line-height:18.48px">Område 2</div>
<div class="c" style="left:1316.6px;top:401.21px;width:58.9px;height:15.58px;line-height:18.48px">2,00</div>
<div class="c" style="left:1375.5px;top:401.21px;width:78.3px;height:15.58px;line-height:18.48px">2,00</div>
<div class="c" style="left:1453.8px;top:401.21px;width:68.7px;height:15.58px;line-height:18.48px">0,00</div>
<div class="c" style="left:1522.5px;top:401.21px;width:81.8px;height:15.58px;line-height:18.48px">0,00</div>
<div class="c" style="left:1655.3px;top:401.21px;width:42.7px;height:15.58px;line-height:18.48px">Ja</div>
<svg style="left:0;top:0" width="1767" height="971"><path d="M1217.10 199.00h4.9l-4.9 4.9zM1217.10 214.58h4.9l-4.9 4.9zM1217.10 230.16h4.9l-4.9 4.9zM1217.10 245.73h4.9l-4.9 4.9zM1217.10 261.31h4.9l-4.9 4.9zM1217.10 276.89h4.9l-4.9 4.9zM1217.10 292.47h4.9l-4.9 4.9zM1217.10 308.05h4.9l-4.9 4.9zM1217.10 323.62h4.9l-4.9 4.9zM1217.10 339.20h4.9l-4.9 4.9zM1217.10 354.78h4.9l-4.9 4.9zM1217.10 370.36h4.9l-4.9 4.9z" fill="#1f8f33"/></svg>
<div class="lb" style="left:69.80px;top:99.93px;font-size:10.60px;letter-spacing:-0.209px;color:#404b66;-webkit-text-stroke:0.2px #404b66">Paste</div>
<div class="lb" style="left:131.70px;top:77.83px;font-size:10.60px;letter-spacing:0.232px;color:#404b66;-webkit-text-stroke:0.2px #404b66">Cut</div>
<div class="lb" style="left:131.70px;top:99.83px;font-size:10.60px;letter-spacing:-0.033px;color:#404b66;-webkit-text-stroke:0.2px #404b66">Copy</div>
<div class="lb" style="left:170.80px;top:99.83px;font-size:10.60px;letter-spacing:-0.280px;color:#404b66;-webkit-text-stroke:0.2px #404b66">Format</div>
<div class="lb" style="left:171.60px;top:113.93px;font-size:10.60px;letter-spacing:-0.000px;color:#404b66;-webkit-text-stroke:0.2px #404b66">Painter</div>
<div class="lb" style="left:568.90px;top:99.83px;font-size:10.60px;letter-spacing:0.029px;color:#404b66;-webkit-text-stroke:0.2px #404b66">Merge and</div>
<div class="lb" style="left:576.10px;top:113.93px;font-size:10.60px;letter-spacing:0.020px;color:#404b66;-webkit-text-stroke:0.2px #404b66">Center</div>
<div class="lb" style="left:636.80px;top:99.83px;font-size:10.60px;letter-spacing:0.126px;color:#404b66;-webkit-text-stroke:0.2px #404b66">Wrap</div>
<div class="lb" style="left:640.60px;top:113.93px;font-size:10.60px;letter-spacing:0.432px;color:#404b66;-webkit-text-stroke:0.2px #404b66">Text</div>
<div class="lb" style="left:814.00px;top:99.93px;font-size:10.60px;letter-spacing:0.130px;color:#404b66;-webkit-text-stroke:0.2px #404b66">Conditional</div>
<div class="lb" style="left:812.80px;top:113.93px;font-size:10.60px;letter-spacing:0.092px;color:#404b66;-webkit-text-stroke:0.2px #404b66">Formatting</div>
<div class="lb" style="left:900.20px;top:77.73px;font-size:10.60px;letter-spacing:0.029px;color:#404b66;-webkit-text-stroke:0.2px #404b66">Format as Table</div>
<div class="lb" style="left:900.20px;top:100.03px;font-size:10.60px;letter-spacing:0.096px;color:#404b66;-webkit-text-stroke:0.2px #404b66">Cell Style</div>
<div class="lb" style="left:1009.30px;top:99.83px;font-size:10.60px;letter-spacing:0.056px;color:#404b66;-webkit-text-stroke:0.2px #404b66">AutoSum</div>
<div class="lb" style="left:1076.10px;top:99.83px;font-size:10.60px;letter-spacing:0.037px;color:#404b66;-webkit-text-stroke:0.2px #404b66">AutoFilter</div>
<div class="lb" style="left:1142.60px;top:99.83px;font-size:10.60px;letter-spacing:0.165px;color:#404b66;-webkit-text-stroke:0.2px #404b66">Sort</div>
<div class="lb" style="left:1181.80px;top:99.83px;font-size:10.60px;letter-spacing:-0.156px;color:#404b66;-webkit-text-stroke:0.2px #404b66">Fill</div>
<div class="lb" style="left:1221.50px;top:99.83px;font-size:10.60px;letter-spacing:-0.180px;color:#404b66;-webkit-text-stroke:0.2px #404b66">Format</div>
<div class="lb" style="left:1275.70px;top:99.83px;font-size:10.60px;letter-spacing:-0.110px;color:#404b66;-webkit-text-stroke:0.2px #404b66">Rows and</div>
<div class="lb" style="left:1275.70px;top:113.93px;font-size:10.60px;letter-spacing:-0.095px;color:#404b66;-webkit-text-stroke:0.2px #404b66">Columns</div>
<div class="lb" style="left:1339.90px;top:99.83px;font-size:10.60px;letter-spacing:0.180px;color:#404b66;-webkit-text-stroke:0.2px #404b66">Worksheet</div>
<div class="lb" style="left:1421.50px;top:99.83px;font-size:10.60px;letter-spacing:-0.031px;color:#404b66;-webkit-text-stroke:0.2px #404b66">Freeze Panes</div>
<div class="lb" style="left:1517.30px;top:99.83px;font-size:10.60px;letter-spacing:0.009px;color:#404b66;-webkit-text-stroke:0.2px #404b66">Find and</div>
<div class="lb" style="left:1516.60px;top:113.93px;font-size:10.60px;letter-spacing:-0.134px;color:#404b66;-webkit-text-stroke:0.2px #404b66">Replace</div>
<div class="lb" style="left:1575.50px;top:99.83px;font-size:10.60px;letter-spacing:0.080px;color:#404b66;-webkit-text-stroke:0.2px #404b66">Symbol</div>
<div class="lb" style="left:1638.90px;top:99.83px;font-size:10.60px;letter-spacing:0.148px;color:#404b66;-webkit-text-stroke:0.2px #404b66">Settings</div>
<svg style="left:0;top:0" width="1767" height="971" viewBox="0 0 1767 971" fill="#fff" stroke="#d3daec" stroke-width="1.1"><path d="M325 74.4H223.5Q220.9 74.4 220.9 77V91.2Q220.9 93.8 223.5 93.8H325"/><path d="M325.4 74.4H391.6Q394.2 74.4 394.2 77V91.2Q394.2 93.8 391.6 93.8H325.4Z"/><rect x="680.6" y="74.5" width="117.2" height="19.5" rx="2.6"/><rect x="470.1" y="73.9" width="20" height="20" rx="3" fill="#e8ebf1" stroke="none"/></svg>
<div class="lb" style="left:222.40px;top:77.45px;font-size:11.40px;letter-spacing:0.106px;color:#151515;-webkit-text-stroke:0.2px #151515">Calibri</div>
<div class="lb" style="left:327.4px;top:77.45px;font-size:11.4px;letter-spacing:-0.3px;color:#5a6a8c">11</div>
<div class="lb" style="left:684.20px;top:77.48px;font-size:11.30px;letter-spacing:-0.088px;color:#4b5a7c;-webkit-text-stroke:0.2px #4b5a7c">General</div>
<div style="position:absolute;left:225.4px;top:97.9px;font-size:16.2px;line-height:18px;color:#1a1a1a;-webkit-text-stroke:0.35px #1a1a1a">B</div>
<div style="position:absolute;left:715.8px;top:98px;font-size:14.6px;line-height:18px;color:#222;transform:scaleX(.84);transform-origin:0 0">%</div>
<div style="position:absolute;font-size:8.5px;line-height:9px;color:#222;letter-spacing:0.1px;white-space:nowrap;left:735.6px;top:99.4px;letter-spacing:0.45px">000</div>
<div style="position:absolute;font-size:8.5px;line-height:9px;color:#222;letter-spacing:0.1px;white-space:nowrap;left:764.6px;top:99.4px">.0</div>
<div style="position:absolute;font-size:8.5px;line-height:9px;color:#222;letter-spacing:0.1px;white-space:nowrap;left:758.9px;top:106.8px">.00</div>
<div style="position:absolute;font-size:8.5px;line-height:9px;color:#222;letter-spacing:0.1px;white-space:nowrap;left:780.6px;top:99.4px">.00</div>
<div style="position:absolute;font-size:8.5px;line-height:9px;color:#222;letter-spacing:0.1px;white-space:nowrap;left:786.1px;top:106.8px">.0</div>
<svg style="left:0;top:0" width="1767" height="971" viewBox="0 0 1767 971"><path d="M99.95 105.60h4.1l-2.05 2.45z" fill="#55648a" stroke="#55648a" stroke-width="0.5" stroke-linejoin="round"/><path d="M316.25 82.60h4.1l-2.05 2.45z" fill="#55648a" stroke="#55648a" stroke-width="0.5" stroke-linejoin="round"/><path d="M387.35 82.60h4.1l-2.05 2.45z" fill="#55648a" stroke="#55648a" stroke-width="0.5" stroke-linejoin="round"/><path d="M285.05 105.60h4.1l-2.05 2.45z" fill="#55648a" stroke="#55648a" stroke-width="0.5" stroke-linejoin="round"/><path d="M314.55 105.60h4.1l-2.05 2.45z" fill="#55648a" stroke="#55648a" stroke-width="0.5" stroke-linejoin="round"/><path d="M343.95 105.60h4.1l-2.05 2.45z" fill="#55648a" stroke="#55648a" stroke-width="0.5" stroke-linejoin="round"/><path d="M372.75 105.60h4.1l-2.05 2.45z" fill="#55648a" stroke="#55648a" stroke-width="0.5" stroke-linejoin="round"/><path d="M401.75 105.60h4.1l-2.05 2.45z" fill="#55648a" stroke="#55648a" stroke-width="0.5" stroke-linejoin="round"/><path d="M431.45 105.60h4.1l-2.05 2.45z" fill="#55648a" stroke="#55648a" stroke-width="0.5" stroke-linejoin="round"/><path d="M612.35 119.10h4.1l-2.05 2.45z" fill="#55648a" stroke="#55648a" stroke-width="0.5" stroke-linejoin="round"/><path d="M790.45 82.60h4.1l-2.05 2.45z" fill="#55648a" stroke="#55648a" stroke-width="0.5" stroke-linejoin="round"/><path d="M702.35 105.60h4.1l-2.05 2.45z" fill="#55648a" stroke="#55648a" stroke-width="0.5" stroke-linejoin="round"/><path d="M869.05 119.10h4.1l-2.05 2.45z" fill="#55648a" stroke="#55648a" stroke-width="0.5" stroke-linejoin="round"/><path d="M985.95 82.70h4.1l-2.05 2.45z" fill="#55648a" stroke="#55648a" stroke-width="0.5" stroke-linejoin="round"/><path d="M953.25 105.30h4.1l-2.05 2.45z" fill="#55648a" stroke="#55648a" stroke-width="0.5" stroke-linejoin="round"/><path d="M1057.75 105.40h4.1l-2.05 2.45z" fill="#55648a" stroke="#55648a" stroke-width="0.5" stroke-linejoin="round"/><path d="M1127.05 105.40h4.1l-2.05 2.45z" fill="#55648a" stroke="#55648a" stroke-width="0.5" stroke-linejoin="round"/><path d="M1165.95 105.40h4.1l-2.05 2.45z" fill="#55648a" stroke="#55648a" stroke-width="0.5" stroke-linejoin="round"/><path d="M1197.75 105.40h4.1l-2.05 2.45z" fill="#55648a" stroke="#55648a" stroke-width="0.5" stroke-linejoin="round"/><path d="M1258.75 105.40h4.1l-2.05 2.45z" fill="#55648a" stroke="#55648a" stroke-width="0.5" stroke-linejoin="round"/><path d="M1321.75 119.10h4.1l-2.05 2.45z" fill="#55648a" stroke="#55648a" stroke-width="0.5" stroke-linejoin="round"/><path d="M1396.95 105.40h4.1l-2.05 2.45z" fill="#55648a" stroke="#55648a" stroke-width="0.5" stroke-linejoin="round"/><path d="M1492.05 105.40h4.1l-2.05 2.45z" fill="#55648a" stroke="#55648a" stroke-width="0.5" stroke-linejoin="round"/><path d="M1559.05 118.90h4.1l-2.05 2.45z" fill="#55648a" stroke="#55648a" stroke-width="0.5" stroke-linejoin="round"/><path d="M1614.95 105.40h4.1l-2.05 2.45z" fill="#55648a" stroke="#55648a" stroke-width="0.5" stroke-linejoin="round"/><path d="M1682.55 105.40h4.1l-2.05 2.45z" fill="#55648a" stroke="#55648a" stroke-width="0.5" stroke-linejoin="round"/><path d="M190.55 148.60h4.1l-2.05 2.45z" fill="#55648a" stroke="#55648a" stroke-width="0.5" stroke-linejoin="round"/><g transform="translate(60 68) scale(0.084890)" fill="none" stroke="#3b3b3b" stroke-width="12.37" stroke-linecap="round" stroke-linejoin="round"><path d="M261 118H230Q216 118 216 132V290Q216 304 230 304H296M334 118H365Q379 118 379 132V200"/><rect x="261" y="101" width="73" height="26" rx="8"/><rect x="297" y="202" width="117" height="121" rx="8" fill="#e8f2ec" stroke="#47a06c"/><path d="M662 115L776 229M788 113L686 229"/><circle cx="672" cy="243" r="17"/><circle cx="790" cy="243" r="17"/><path d="M696 426H670Q658 426 658 438V517Q658 529 670 529H742Q754 529 754 517V490"/><rect x="696" y="383" width="98" height="101" rx="12"/><path d="M1496 200V113Q1496 101 1508 101H1517Q1529 101 1529 113V200Q1529 219 1552 219H1576Q1594 219 1594 237V254M1496 200Q1496 219 1473 219H1449Q1431 219 1431 237V254"/><rect x="1449" y="283" width="127" height="36" fill="#e8f2ec" stroke="none"/><path d="M1431 254V326Q1431 334 1439 334H1586Q1594 334 1594 326V254M1431 262H1594" stroke="#47a06c"/></g><g transform="translate(212 68) scale(0.084890)" fill="none" stroke="#3b3b3b" stroke-width="12.37" stroke-linecap="round" stroke-linejoin="round"><path d="M661 531H811" stroke="#47a06c" stroke-width="15.3" stroke-linecap="butt"/><rect x="1009" y="389" width="148" height="144" rx="12" stroke="#484848" stroke-width="14.1"/><path d="M1083 389V533M1009 461H1157" stroke="#484848" stroke-width="14.1"/><path d="M1359 514V392Q1359 385 1366 385H1499Q1506 385 1506 392V434" stroke="#2e2e2e"/><path d="M1398 458H1462M1430 426V490" stroke="#b0b0b0" stroke-width="9.4" stroke-dasharray="5 6" stroke-linecap="butt"/><path d="M1359 531H1446M1497 451L1519 473L1462 530H1437L1439 510Z" stroke="#47a06c"/></g><g transform="translate(320 68) scale(0.084890)" fill="none" stroke="#3b3b3b" stroke-width="12.37" stroke-linecap="round" stroke-linejoin="round"><path d="M1097 117V158M1076 137H1118" stroke="#47a06c" stroke-width="14.1"/><path d="M1326 133H1378" stroke="#47a06c" stroke-width="14.1"/><path d="M452 438L514 383L577 446L525 493H480L447 462L470 440M577 446V482M436 425L470 440" stroke="#222" fill="#f2f2f2"/><path d="M490 455H540" stroke="#999"/><rect x="432" y="496" width="155" height="39" rx="14" fill="#f4ef00" stroke="#4466c2" stroke-width="10.6"/><rect x="790" y="500" width="140" height="25" rx="12" fill="#f20000" stroke="none"/><path d="M1215 393L1284 456L1245 497L1172 432Z" fill="#dedede" stroke="none"/><path d="M1215 393L1284 456L1221 522H1182L1133 478ZM1172 432L1245 497M1182 522H1270" stroke="#222"/></g><g transform="translate(440 68) scale(0.084890)" fill="none" stroke="#3b3b3b" stroke-width="12.37" stroke-linecap="round" stroke-linejoin="round"><path d="M145 125H290M180 157H257M180 187H257M433 160H514M390 193H553M433 228H514M690 195H767M690 226H767M658 258H800M910 133H1060M997 175H1060M997 216H1060M910 258H1060M1168 133H1320M1255 175H1320M1255 216H1320M1168 258H1320M146 400H214M146 441H290M146 482H214M146 522H290M441 400H503M401 441H543M441 482H503M401 522H543M732 400H800M658 441H800M732 482H800M658 522H800M910 400H1052M910 441H1052M910 482H1052M910 522H1052M1182 470H1294M1182 512H1294M1158 400V526M1316 400V526" stroke="#444" stroke-width="14.1" stroke-linecap="butt"/><path d="M905 196H960M928 173L905 196L928 219M1157 196H1212M1189 173L1212 196L1189 219M1183 408H1226M1200 392L1183 408L1200 424M1250 408H1293M1276 392L1293 408L1276 424" stroke="#47a06c" stroke-width="12.4"/></g><g transform="translate(560 68) scale(0.084890)" fill="none" stroke="#3b3b3b" stroke-width="12.37" stroke-linecap="round" stroke-linejoin="round"><path d="M386 135V188M461 135V188" stroke="#bdbdbd"/><path d="M312 190V147Q312 133 326 133H524Q538 133 538 147V190Z" stroke="#444" stroke-width="13.0"/><path d="M312 192V309Q312 323 326 323H524Q538 323 538 309V192" stroke="#47a06c" stroke-width="13.5"/><path d="M350 259H502M376 237L350 259L376 281M476 237L502 259L476 281" stroke="#47a06c" stroke-width="12.4"/><path d="M958 175V148Q958 133 973 133H998M1135 133H1158Q1173 133 1173 148V175M958 280V308Q958 323 973 323H998M1135 323H1158Q1173 323 1173 308V280" stroke="#333" stroke-width="13.0"/><path d="M1010 176H1130M1010 206H1130M1010 237H1080" stroke="#b5b5b5"/><path d="M1126 242V290H1046M1070 268L1046 290L1070 312" stroke="#47a06c" stroke-width="12.4"/><circle cx="1556" cy="459" r="68" stroke="#222" stroke-width="13.0"/></g><text x="692.15" y="110.2" font-size="9.3" text-anchor="middle" fill="#47a06c" font-family="Liberation Sans, sans-serif">$</text><g transform="translate(670 68) scale(0.084890)" fill="none" stroke="#3b3b3b" stroke-width="12.37" stroke-linecap="round" stroke-linejoin="round"><path d="M1040 411H1103M1063 392L1040 411L1063 430M1290 492H1353M1330 473L1353 492L1330 511" stroke="#47a06c" stroke-width="14.1"/><path d="M861 486V506L855 518" stroke="#47a06c" stroke-width="17.7"/><circle cx="1125" cy="433" r="5" fill="#47a06c" stroke="none"/><circle cx="1058" cy="522" r="5" fill="#47a06c" stroke="none"/><circle cx="1312" cy="433" r="5" fill="#47a06c" stroke="none"/><circle cx="1375" cy="522" r="5" fill="#47a06c" stroke="none"/></g><g transform="translate(826 72) scale(0.047371)" fill="none" stroke="#3b3b3b" stroke-width="22.17" stroke-linecap="round" stroke-linejoin="round"><path d="M160 262H520M160 375H520" stroke="#cccccc" stroke-width="16.9"/><path d="M242 158H383V262H330V372H438V492H242Z" fill="#edf6f0" stroke="#4fa674" stroke-width="20.1" stroke-linejoin="miter"/><rect x="268" y="183" width="98" height="58" fill="#dfeee4" stroke="none"/><rect x="266" y="287" width="42" height="62" fill="#dfeee4" stroke="none"/><rect x="266" y="398" width="148" height="70" fill="#dfeee4" stroke="none"/><path d="M242 262H330M242 372H330" stroke="#6bb48a" stroke-width="16.9"/><path d="M236 158H176Q158 158 158 176V474Q158 492 176 492H236M389 158H504Q522 158 522 176V474Q522 492 504 492H444" stroke="#333" stroke-width="24.3"/><rect x="1213" y="122" width="150" height="138" rx="16" stroke="#4fa674" stroke-width="20.1"/><path d="M1213 191H1363M1297 122V260" stroke="#4fa674" stroke-width="20.1"/><path d="M1380 120H1424Q1446 120 1446 142V184M1214 275V316Q1214 338 1236 338H1296" stroke="#333" stroke-width="24.3"/><path d="M1457 236L1493 264L1397 368L1350 334ZM1350 334L1397 368L1318 390Z" stroke="#4fa674" stroke-width="19.0" fill="#fff"/><path d="M1255 608V858M1213 645H1470M1213 815H1298" stroke="#333" stroke-width="24.3" stroke-linecap="butt"/><path d="M1445 624L1495 645L1445 666Z" fill="#333" stroke="none"/><path d="M1457 713L1493 741L1397 845L1350 811ZM1350 811L1397 845L1318 867Z" stroke="#4fa674" stroke-width="19.0" fill="#fff"/></g><g transform="translate(1000 68) scale(0.118850)" fill="none" stroke="#3b3b3b" stroke-width="8.83" stroke-linecap="round" stroke-linejoin="round"><path d="M797 90H935Q945 90 938 99L882 172V228Q882 236 874 236H856Q848 236 848 228V172L792 99Q785 90 797 90Z" stroke="#333" stroke-width="9.6"/><path d="M1330 92L1240 228H1332V92ZM1290 152H1332M1264 191H1332" stroke="#333" stroke-width="8.9"/><path d="M1375 80V233M1352 208L1375 233L1398 208" stroke="#47a06c" stroke-width="8.9"/><rect x="1542" y="82" width="146" height="152" rx="6" stroke="#333" stroke-width="10.3"/><path d="M1542 119H1688" stroke="#333" stroke-width="11.9"/><path d="M1615 137V210M1588 184L1615 210L1642 184" stroke="#47a06c" stroke-width="8.9"/></g><g transform="translate(1210 68) scale(0.118850)" fill="none" stroke="#3b3b3b" stroke-width="8.83" stroke-linecap="round" stroke-linejoin="round"><rect x="204" y="116" width="130" height="94" fill="#e8f2ec" stroke="#47a06c" stroke-width="9.6"/><path d="M204 96V116H181M334 96V116H351M181 210H204V230" stroke="#333" stroke-width="8.9"/><circle cx="332" cy="211" r="6" fill="#47a06c" stroke="none"/><path d="M685 185H735" stroke="#c8c8c8"/><path d="M685 144V222Q685 230 693 230H729Q737 230 737 222V144" stroke="#333" stroke-width="9.6"/><rect x="685" y="96" width="154" height="46" rx="5" fill="#e8f2ec" stroke="#47a06c" stroke-width="9.6"/><path d="M737 96V142M790 96V142" stroke="#47a06c" stroke-width="8.9"/><path d="M1318 97V185M1370 97V185M1267 141H1418" stroke="#c8c8c8"/><path d="M1267 185V105Q1267 97 1275 97H1410Q1418 97 1418 105V177Q1418 185 1410 185H1360" stroke="#333" stroke-width="9.6"/><path d="M1267 186H1362L1348 222Q1345 230 1337 230H1277Q1267 230 1267 220Z" fill="#e8f2ec" stroke="#47a06c" stroke-width="9.6"/><path d="M1285 208H1335" stroke="#9dccb0"/></g><g transform="translate(1410 68) scale(0.169779)" fill="none" stroke="#3b3b3b" stroke-width="6.18" stroke-linecap="round" stroke-linejoin="round"><path d="M256 65V152M281 65V120M306 65V112M230 86H338M230 107H300M230 123H285M230 139H272" stroke="#c4c4c4" stroke-width="5.3"/><path d="M337 88V72Q337 65 330 65H236Q229 65 229 72V146Q229 153 236 153H272" stroke="#333" stroke-width="7.4"/><path d="M316 115V166M293 127L339 154M339 127L293 154" stroke="#47a06c" stroke-width="6.5"/><circle cx="752" cy="103" r="44" fill="#eef6f1" stroke="#47a06c" stroke-width="6.2"/><path d="M786 136L817 166" stroke="#333" stroke-width="6.2"/><path d="M1448 168H1428V52H1546V168H1526" stroke="#aaa" stroke-width="5.3"/><rect x="1449" y="73" width="30" height="29" stroke="#c2c2c2" stroke-width="4.7"/><rect x="1496" y="73" width="30" height="29" stroke="#c2c2c2" stroke-width="4.7"/><path d="M1478 134L1508 162" stroke="#2f9a5c" stroke-width="13.5"/><circle cx="1473" cy="129" r="13" fill="#2f9a5c" stroke="none"/><path d="M1460 113L1472 127" stroke="#fff" stroke-width="7.7"/></g><text transform="translate(250.47 112.40) skewX(-9) scale(0.734 1)" font-family="'Liberation Serif',serif" font-size="18.17" fill="#262626" stroke="#262626" stroke-width="0.00" font-style="italic">I</text><text transform="translate(267.79 110.70) skewX(0) scale(1.417 1)" font-family="'DejaVu Sans Light','DejaVu Sans',sans-serif" font-size="13.56" fill="#1e1e1e" stroke="#1e1e1e" stroke-width="0.45" >U</text><text transform="translate(401.89 90.10) skewX(0) scale(1.048 1)" font-family="'DejaVu Sans Light','DejaVu Sans',sans-serif" font-size="16.16" fill="#262626" stroke="#262626" stroke-width="0.45" >A</text><text transform="translate(422.69 90.10) skewX(0) scale(1.048 1)" font-family="'DejaVu Sans Light','DejaVu Sans',sans-serif" font-size="16.16" fill="#262626" stroke="#262626" stroke-width="0.45" >A</text><text transform="translate(388.50 108.70) skewX(0) scale(1.222 1)" font-family="'DejaVu Sans Light','DejaVu Sans',sans-serif" font-size="10.82" fill="#1e1e1e" stroke="#1e1e1e" stroke-width="0.45" >A</text><text transform="translate(1024.17 95.40) skewX(0) scale(1.343 1)" font-family="'DejaVu Sans Light','DejaVu Sans',sans-serif" font-size="23.29" fill="#2c2c2c" stroke="#2c2c2c" stroke-width="0.12" >Σ</text><text transform="translate(1587.00 95.00) skewX(0) scale(1.170 1)" font-family="'DejaVu Sans Light','DejaVu Sans',sans-serif" font-size="23.36" fill="#2a2a2a" stroke="#2a2a2a" stroke-width="0.00" >Ω</text></svg>
</div></div>
<svg style="left:0;top:0" width="1767" height="971"><path d="M50 60H1717V68.5H50ZM50 902.2H1717V910H50Z" fill="#231f20"/></svg>
</body></html>
